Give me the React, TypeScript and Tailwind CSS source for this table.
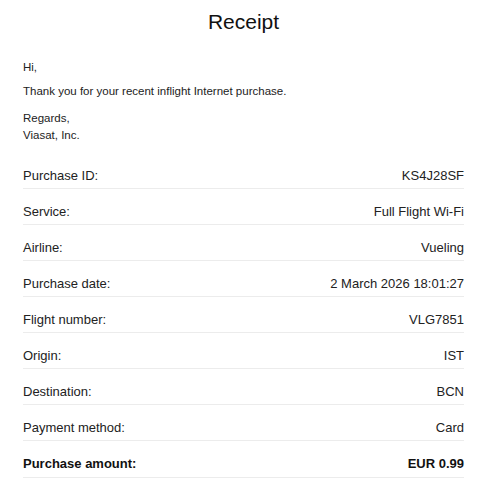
import React from "react";

const rows: [string, string][] = [
  ["Purchase ID:", "KS4J28SF"],
  ["Service:", "Full Flight Wi-Fi"],
  ["Airline:", "Vueling"],
  ["Purchase date:", "2 March 2026 18:01:27"],
  ["Flight number:", "VLG7851"],
  ["Origin:", "IST"],
  ["Destination:", "BCN"],
  ["Payment method:", "Card"],
];

export default function App() {
  return (
    <div
      className="w-[500px] h-[495px] bg-white text-[#1c1c1c] pl-[23px] pr-[36px] overflow-hidden"
      style={{ fontFamily: '"Liberation Sans", Arial, sans-serif' }}
    >
      <h1 className="text-center text-[21px] leading-[28px] pt-[8px] font-normal text-[#111]">Receipt</h1>
      <div className="text-[11.5px] leading-[16px] text-[#222] mt-[23px]">
        <p>Hi,</p>
        <p className="mt-[8px]">Thank you for your recent inflight Internet purchase.</p>
        <p className="mt-[11px]">Regards,</p>
        <p className="leading-[18px]">Viasat, Inc.</p>
      </div>
      <div className="mt-[9px]">
        {rows.map(([k, v]) => (
          <div key={k} className="flex justify-between pt-[15px] pb-[5px] border-b border-[#ececec] text-[13px] leading-[15px] text-[#222]">
            <span>{k}</span>
            <span>{v}</span>
          </div>
        ))}
        <div className="flex justify-between pt-[15px] pb-[6px] border-b border-[#ececec] text-[13px] leading-[15px] font-bold text-[#111]">
          <span>Purchase amount:</span>
          <span>EUR 0.99</span>
        </div>
      </div>
    </div>
  );
}
